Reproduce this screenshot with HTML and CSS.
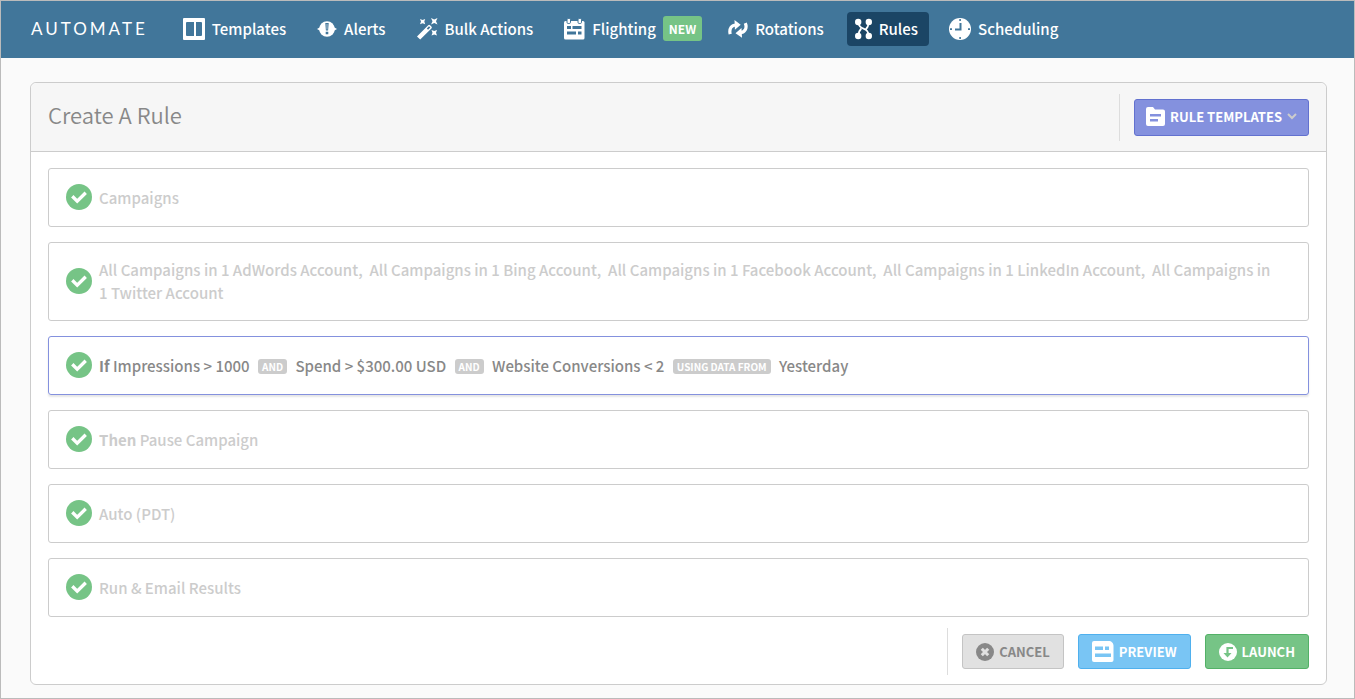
FILE: index.html
```html
<!DOCTYPE html>
<html lang="en">
<head>
    <meta charset="utf-8">
    <title>Automate - Create A Rule</title>
    <link rel="stylesheet" href="styles.css">
</head>
<body>
    <!-- check mark shared by every step -->
    <svg class="defs" width="0" height="0">
        <symbol id="check" viewBox="0 0 26 26">
            <circle cx="13" cy="13" r="13" fill="#76c486"/>
            <path d="M7.500 13.500l3.700 3.600L18.500 10" fill="none" stroke="#fff" stroke-width="3.400" stroke-linecap="square"/>
        </symbol>
    </svg>

    <header class="navbar">
        <a class="logo" href="#">AUTOMATE</a>
        <nav class="nav">
            <a class="nav-item" href="#">
                <svg width="22" height="22" viewBox="0 0 22 22"><path fill="#fff" fill-rule="evenodd" d="M1 0h20a1 1 0 0 1 1 1v20a1 1 0 0 1-1 1H1a1 1 0 0 1-1-1V1a1 1 0 0 1 1-1zM4 4a1 1 0 0 0-1 1v12a1 1 0 0 0 1 1h7V4zM13 4v14h5a1 1 0 0 0 1-1V5a1 1 0 0 0-1-1z"/></svg>
                Templates
            </a>
            <a class="nav-item" href="#">
                <svg width="20" height="20" viewBox="0 0 20 20"><circle cx="10" cy="10" r="7.800" fill="#fff"/><path fill="#fff" d="M0 10l3.500-2v4zM20 10l-3.500-2v4z"/><path fill="#41769a" d="M8.300 4h3.400l-.6 7.500H8.900zM8.700 12.700h2.600v2.600H8.700z"/><path stroke="#fff" stroke-width=".6" d="M10 5v5.500"/></svg>
                Alerts
            </a>
            <a class="nav-item" href="#">
                <svg width="21" height="22" viewBox="0 0 21 22"><g fill="#fff"><path d="M0 18.500L11.200 7.300a1.300 1.300 0 0 1 1.900 0l1.300 1.300a1.300 1.300 0 0 1 0 1.900L3.200 21.600z"/><path d="M3 1l2.600 1L8.200 1l-.9 2.600.9 2.700-2.600-1L3 6.300l1-2.700z"/><path d="M14 0l3.200 1.500L20.500 0 19 3.300l1.500 3.200L17.200 5 14 6.500l1.500-3.200z"/><path d="M14.500 12l2.700 1 2.800-1-1 2.800 1 2.700-2.800-1-2.700 1 1-2.700z"/></g><path d="M9.800 10.500L12 8.300l1.300 1.300-2.200 2.200z" fill="#41769a"/></svg>
                Bulk Actions
            </a>
            <a class="nav-item with-badge" href="#">
                <svg width="21" height="22" viewBox="0 0 21 22"><rect y="3" width="20.500" height="18.500" rx="1.500" fill="#fff"/><g fill="#fff" stroke="#41769a"><rect x="3" y=".5" width="3.500" height="5" rx="1.200"/><rect x="14" y=".5" width="3.500" height="5" rx="1.200"/></g><g fill="#41769a"><path d="M3 8h4v3H3zM8.500 8h9v3h-9zM3 13.500h9v3H3zM14 13.500h3.500v3H14z"/></g></svg>
                Flighting
                <span class="new">NEW</span>
            </a>
            <a class="nav-item" href="#">
                <svg width="20" height="18" viewBox="0 0 20 18"><g fill="none" stroke="#fff" stroke-width="3.200"><path d="M2.200 14.200C.8 8.500 3.800 5 8 5"/><path d="M17.300 3.200C19.500 8.500 16.500 12.700 12 12.700"/></g><path fill="#fff" d="M6.500 0l6.200 4.700-5.800 5zM13.500 8l.5 9.700-6.500-4.500z"/></svg>
                Rotations
            </a>
            <a class="nav-item active" href="#">
                <svg width="17" height="22" viewBox="0 0 17 22"><g fill="#fff"><circle cx="3.200" cy="4" r="3.200"/><circle cx="13.800" cy="4" r="3.200"/><circle cx="3.200" cy="18" r="3.200"/><circle cx="13.800" cy="18" r="3.200"/></g><path d="M3.200 4c.5 4 1.600 5.500 5.300 6.700s4.800 2.800 5.300 7.300M3.200 18c.3-3.500 1-5.500 3-7.500M13.800 4c-.3 3.500-1 5.500-3 7.500" fill="none" stroke="#fff" stroke-width="1.800"/></svg>
                Rules
            </a>
            <a class="nav-item" href="#">
                <svg width="22" height="22" viewBox="0 0 22 22"><circle cx="11" cy="11" r="11" fill="#fff"/><path d="M11.500 5v6.500H6" fill="none" stroke="#41769a" stroke-width="2"/><path fill="#41769a" d="M10.300 1h1.600v2h-1.600zM10.300 19h1.600v2h-1.600zM1 10.300h2v1.600H1zM19 10.300h2v1.600h-2z"/></svg>
                Scheduling
            </a>
        </nav>
    </header>

    <main class="panel">
        <div class="panel-header">
            <h1>Create A Rule</h1>
            <div class="header-actions">
                <button type="button" class="btn btn-templates">
                    <svg width="19" height="20" viewBox="0 0 19 20"><path fill="#fff" d="M2 0h5l2 2.500h8a2 2 0 0 1 2 2V17a2 2 0 0 1-2 2H2a2 2 0 0 1-2-2V2a2 2 0 0 1 2-2z"/><path fill="#8491de" d="M4 7h11v2.500H4zM4 12h8v2.500H4z"/></svg>
                    RULE TEMPLATES
                    <svg width="10" height="9" viewBox="0 0 10 9"><path d="M1 1l4 4 4-4" fill="none" stroke="#ccc" stroke-width="2"/></svg>
                </button>
            </div>
        </div>

        <div class="steps">
            <section class="step">
                <svg class="check"><use href="#check"/></svg>
                <p>Campaigns</p>
            </section>
            <section class="step">
                <svg class="check"><use href="#check"/></svg>
                <p>All Campaigns in 1 AdWords Account,&nbsp; All Campaigns in 1 Bing Account,&nbsp; All Campaigns in 1 Facebook Account,&nbsp; All Campaigns in 1 LinkedIn Account,&nbsp; All Campaigns in 1 Twitter Account</p>
            </section>
            <section class="step current">
                <svg class="check"><use href="#check"/></svg>
                <p><b>If</b> Impressions &gt; 1000 <span class="tag">AND</span> Spend &gt; $300.00 USD <span class="tag">AND</span> Website Conversions &lt; 2 <span class="tag">USING DATA FROM</span> Yesterday</p>
            </section>
            <section class="step">
                <svg class="check"><use href="#check"/></svg>
                <p><b>Then</b> Pause Campaign</p>
            </section>
            <section class="step">
                <svg class="check"><use href="#check"/></svg>
                <p>Auto (PDT)</p>
            </section>
            <section class="step">
                <svg class="check"><use href="#check"/></svg>
                <p>Run &amp; Email Results</p>
            </section>
        </div>

        <div class="panel-footer">
            <div class="footer-actions">
                <button type="button" class="btn btn-cancel">
                    <svg width="18" height="18" viewBox="0 0 18 18"><circle cx="9" cy="9" r="9" fill="#888"/><path d="M5.800 5.800l6.400 6.400M12.200 5.800l-6.400 6.400" stroke="#e1e1e1" stroke-width="3"/></svg>
                    CANCEL
                </button>
                <button type="button" class="btn btn-preview">
                    <svg width="22" height="21" viewBox="0 0 22 21"><path fill="#fff" d="M2 0h14.500c3 0 5 2 5 5v14a2 2 0 0 1-2 2H2a2 2 0 0 1-2-2V2a2 2 0 0 1 2-2z"/><path fill="#79c5f4" d="M3 5.500h8V9H3zM13 5.500h4V9h-4zM3 12.500h16V16H3z"/></svg>
                    PREVIEW
                </button>
                <button type="button" class="btn btn-launch">
                    <svg width="18" height="18" viewBox="0 0 18 18"><circle cx="9" cy="9" r="9" fill="#fff"/><path d="M14 5H8.500v6" fill="none" stroke="#76c486" stroke-width="2.200"/><path d="M4.500 10h8l-4 4.500z" fill="#76c486"/></svg>
                    LAUNCH
                </button>
            </div>
        </div>
    </main>
</body>
</html>
```
FILE: styles.css
```css
* {
  box-sizing: border-box;
}

body {
  margin: 0;
  min-height: 100vh;
  border: 1px solid #bbbbbb;
  background-color: #fafafa;
  font-family: "Noto Sans CJK JP", "Open Sans", sans-serif;
  font-size: 15px;
  line-height: 23px;
  color: #888888;
}

.defs {
  position: absolute;
}

.navbar {
  display: flex;
  align-items: center;
  height: 57px;
  padding: 0 0 2px 30px;
  background-color: #41769a;
}

.logo {
  margin-right: 27px;
  font-family: Lato, sans-serif;
  font-size: 17px;
  letter-spacing: 3px;
  color: #ffffff;
  text-decoration: none;
}

.nav {
  display: flex;
  align-items: center;
  gap: 12px;
}

.nav-item {
  display: flex;
  align-items: center;
  gap: 7px;
  height: 34px;
  padding: 0 11px 0 8px;
  border-radius: 4px;
  font-weight: 500;
  color: #ffffff;
  text-decoration: none;
  white-space: nowrap;
}

.nav-item.active {
  background-color: #1b4565;
}

.nav-item.with-badge {
  padding-right: 6px;
}

.new {
  padding: 0 6px;
  border-radius: 3px;
  background-color: #76c486;
  font-size: 12px;
  font-weight: bold;
  line-height: 25px;
}

.panel {
  margin: 24px 27px 13px 29px;
  border: 1px solid #cccccc;
  border-radius: 6px;
  background-color: #ffffff;
}

.panel-header {
  display: flex;
  align-items: center;
  justify-content: space-between;
  height: 69px;
  padding: 0 17px;
  border-bottom: 1px solid #cccccc;
  border-radius: 6px 6px 0 0;
  background-color: #f6f6f6;
}

h1 {
  margin: 0;
  padding-bottom: 5px;
  font-size: 22px;
  font-weight: 350;
}

.header-actions,
.footer-actions {
  display: flex;
  align-items: center;
  gap: 14px;
  height: 47px;
  padding-left: 14px;
  border-left: 1px solid #dddddd;
}

.btn {
  display: flex;
  align-items: center;
  justify-content: center;
  gap: 5px;
  height: 35px;
  padding: 0 13px;
  border: 1px solid;
  border-radius: 3px;
  font-family: inherit;
  font-size: 13px;
  font-weight: bold;
  line-height: 18px;
  color: #ffffff;
  cursor: pointer;
}

.btn-templates {
  height: 37px;
  padding: 0 11px;
  border-color: #6271cf;
  background-color: #8491de;
}

.btn-cancel {
  border-color: #c4c4c4;
  background-color: #e1e1e1;
  color: #888888;
}

.btn-preview {
  border-color: #4fb0ee;
  background-color: #79c5f4;
}

.btn-launch {
  border-color: #53b167;
  background-color: #76c486;
}

.steps {
  display: flex;
  flex-direction: column;
  gap: 15px;
  padding: 16px 17px 11px;
}

.step {
  display: flex;
  align-items: center;
  gap: 7px;
  padding: 15px 26px 16px 17px;
  border: 1px solid #cccccc;
  border-radius: 3px;
  font-weight: 500;
  color: #cccccc;
}

.step p {
  margin: 0;
}

.step.current {
  border-color: #8491de;
  box-shadow: 0 2px 2px #e6e6e6;
  color: #888888;
}

.check {
  flex: none;
  width: 26px;
  height: 26px;
}

.tag {
  display: inline-block;
  margin: 0 5px;
  padding: 0 4px;
  border-radius: 3px;
  background-color: #cccccc;
  font-size: 10px;
  font-weight: bold;
  line-height: 15px;
  color: #ffffff;
  vertical-align: 1px;
}

.panel-footer {
  display: flex;
  justify-content: flex-end;
  padding: 0 17px 9px;
}
```
